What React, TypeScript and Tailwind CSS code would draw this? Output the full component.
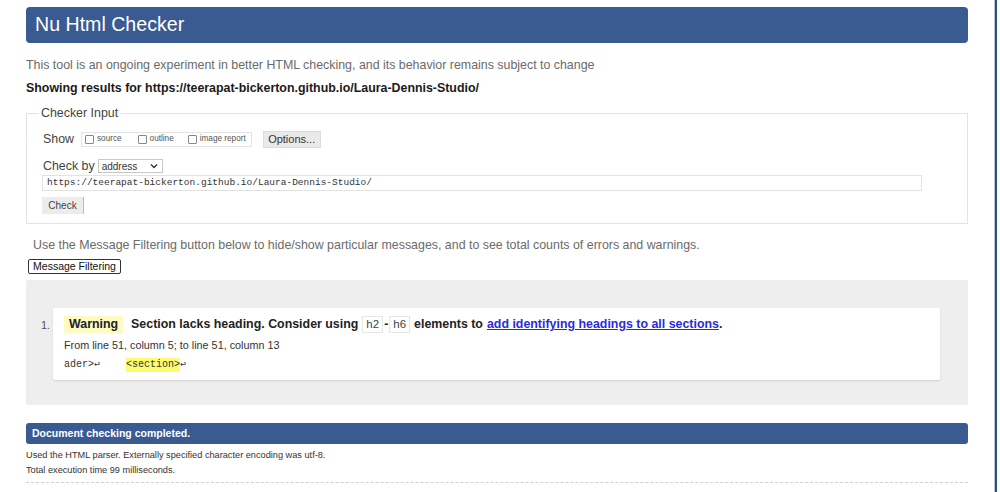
export default function App() {
  return (
    <div className="flex w-[1000px] h-[492px] bg-white overflow-hidden font-['Liberation_Sans',Arial,sans-serif] text-[#222]">
      <div className="w-[994px] shrink-0 pl-[26px] pr-[26px] pt-[7px]">
        <div className="h-[36px] bg-[#395b91] rounded-[4px] flex items-center pl-[9px] text-white text-[19.6px] leading-none">
          Nu Html Checker
        </div>
        <p className="mt-[14px] text-[12.4px] leading-[16px] text-[#6b6b6b]">
          This tool is an ongoing experiment in better HTML checking, and its behavior remains subject to change
        </p>
        <p className="mt-[7px] text-[12.4px] leading-[16px] font-bold text-[#1a1a1a]">
          Showing results for https://teerapat-bickerton.github.io/Laura-Dennis-Studio/
        </p>
        <fieldset className="mt-[9px] border border-[#e4e4e4]">
          <legend className="ml-[12px] px-[2px] text-[12.4px] leading-[16px] text-[#444]">Checker Input</legend>
          <div className="pl-[16px] pr-[16px] pb-[9px]">
            <div className="mt-[10px] flex items-center h-[17px]">
              <span className="text-[12.4px] text-[#444] mr-[7px]">Show</span>
              <div className="flex items-center h-[15px] border border-[#e2e2e2] pl-[3px] pr-[5px] text-[8.2px] text-[#555]">
                <span className="w-[9px] h-[9px] border border-[#888] rounded-[1px] mr-[3px]"></span>
                <span className="mr-[16px]">source</span>
                <span className="w-[9px] h-[9px] border border-[#888] rounded-[1px] mr-[3px]"></span>
                <span className="mr-[14px]">outline</span>
                <span className="w-[9px] h-[9px] border border-[#888] rounded-[1px] mr-[3px]"></span>
                <span>image report</span>
              </div>
              <div className="ml-[11px] h-[17px] w-[58px] flex items-center justify-center bg-[#e9e9e9] border border-[#dcdcdc] text-[11px] text-[#333]">
                Options...
              </div>
            </div>
            <div className="mt-[11px] flex items-center h-[14px]">
              <span className="text-[12.4px] text-[#444] mr-[3px]">Check by</span>
              <div className="w-[65px] h-[14px] border border-[#c8c8c8] flex items-center justify-between pl-[3px] pr-[4px] text-[10px] text-[#333]">
                <span>address</span>
                <svg width="8" height="6" viewBox="0 0 8 6" fill="none" stroke="#333" strokeWidth="1.4">
                  <path d="M1 1.5 L4 4.5 L7 1.5" />
                </svg>
              </div>
            </div>
            <div className="mt-[2px] w-[880px] -ml-[1px] h-[16px] border border-[#e2e2e2] flex items-center pl-[4px] font-['Liberation_Mono',monospace] text-[9.5px] text-[#333]">
              https://teerapat-bickerton.github.io/Laura-Dennis-Studio/
            </div>
            <div className="mt-[6px] -ml-[1px] w-[42px] h-[17px] bg-[#ececec] border-r border-[#bbb] flex items-center justify-center text-[10px] text-[#444]">
              Check
            </div>
          </div>
        </fieldset>
        <p className="mt-[13px] ml-[7px] text-[12.4px] leading-[16px] text-[#6b6b6b]">
          Use the Message Filtering button below to hide/show particular messages, and to see total counts of errors and warnings.
        </p>
        <div className="mt-[6px] ml-[2px] w-[93px] h-[15px] border border-[#333] rounded-[2px] flex items-center justify-center text-[10.5px] text-[#111]">
          Message Filtering
        </div>
        <div className="mt-[6px] h-[125px] bg-[#eeeeee] rounded-[2px] flex pl-[15px] pr-[28px] pt-[28px]">
          <span className="w-[12px] pt-[10px] text-[11px] leading-[14px] text-[#555]">1.</span>
          <div className="flex-1 h-[72px] bg-white rounded-[2px] shadow-[0_1px_2px_rgba(0,0,0,0.12)] pl-[11px] pt-[8px]">
            <div className="flex items-center h-[17px] text-[12.4px] font-bold text-[#222]">
              <span className="h-[17px] bg-[#fdfac4] px-[5px] flex items-center">Warning</span>
              <span className="ml-[8px]">Section lacks heading. Consider using</span>
              <span className="ml-[4px] h-[17px] px-[3px] border border-[#e6e6e6] flex items-center font-normal text-[11.5px] text-[#444]">h2</span>
              <span className="mx-[1px]">-</span>
              <span className="h-[17px] px-[3px] border border-[#e6e6e6] flex items-center font-normal text-[11.5px] text-[#444]">h6</span>
              <span className="ml-[4px]">elements to</span>
              <span className="ml-[4px] text-[#2b2bdb] underline">add identifying headings to all sections</span>
              <span>.</span>
            </div>
            <div className="mt-[5px] text-[10.8px] leading-[14px] text-[#333]">
              From line 51, column 5; to line 51, column 13
            </div>
            <div className="mt-[6px] flex items-center font-['Liberation_Mono',monospace] text-[10px] leading-[14px] text-[#333]">
              <span>ader&gt;↩</span>
              <span className="ml-[26px] bg-[#fcfc6e]">&lt;section&gt;</span>
              <span>↩</span>
            </div>
          </div>
        </div>
        <div className="mt-[18px] h-[21px] bg-[#395b91] rounded-[3px] flex items-center pl-[6px] text-white text-[10.5px] font-bold">
          Document checking completed.
        </div>
        <p className="mt-[5px] text-[9.2px] leading-[13px] text-[#333]">
          Used the HTML parser. Externally specified character encoding was utf-8.
        </p>
        <p className="mt-[2px] text-[9.2px] leading-[13px] text-[#333]">
          Total execution time 99 milliseconds.
        </p>
        <div className="mt-[5px] border-t border-dashed border-[#d0d0d0]"></div>
      </div>
      <div className="w-[1px] bg-[#b8c6dc]"></div>
      <div className="w-[2px] bg-[#2d4d80]"></div>
      <div className="flex-1 bg-white"></div>
    </div>
  );
}
